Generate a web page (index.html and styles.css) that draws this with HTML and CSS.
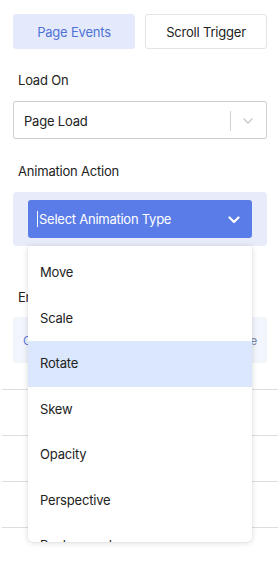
FILE: index.html
```html
<!DOCTYPE html>
<html>
<head>
<meta charset="utf-8">
<link rel="stylesheet" href="styles.css">
</head>
<body>
<div class="panel">
  <div class="tabs">
    <button class="tab tab-active">Page Events</button>
    <button class="tab">Scroll Trigger</button>
  </div>

  <div class="label label-first">Load On</div>
  <div class="select">
    <span class="select-value">Page Load</span>
    <span class="select-sep"></span>
    <svg class="select-chev" width="12" height="8" viewBox="0 0 12 8"><path d="M1.5 1.5 L6 6 L10.5 1.5" fill="none" stroke="#c8c8c8" stroke-width="1.4"/></svg>
  </div>

  <div class="label label-second">Animation Action</div>
  <div class="action-wrap">
    <div class="action-box">
      <div class="action-btn">
        <span class="caret"></span>
        <span class="action-text">Select Animation Type</span>
        <svg class="action-chev" width="12" height="8" viewBox="0 0 12 8"><path d="M1.5 1.5 L6 6 L10.5 1.5" fill="none" stroke="#ffffff" stroke-width="2.2" stroke-linecap="round" stroke-linejoin="round"/></svg>
      </div>
    </div>
    <div class="menu">
      <div class="menu-item">Move</div>
      <div class="menu-item">Scale</div>
      <div class="menu-item menu-item-active">Rotate</div>
      <div class="menu-item">Skew</div>
      <div class="menu-item">Opacity</div>
      <div class="menu-item">Perspective</div>
      <div class="menu-item">Background</div>
    </div>
  </div>

  <div class="label label-third">Entrance Effects</div>
  <div class="effects-box">
    <span class="effects-left">Clear</span>
    <span class="effects-right">Remove</span>
  </div>

  <div class="rows">
    <div class="row"></div>
    <div class="row"></div>
    <div class="row"></div>
    <div class="row"></div>
  </div>
</div>
</body>
</html>
```
FILE: styles.css
```css
* { box-sizing: border-box; }
html, body {
  margin: 0;
  padding: 0;
  background: #ffffff;
}
body {
  font-family: Inter, "Liberation Sans", sans-serif;
  font-size: 13px;
  letter-spacing: -0.2px;
  color: #222222;
  width: 280px;
  height: 566px;
  overflow: hidden;
}
.panel {
  padding: 14px 13px 0 13px;
}
.tabs {
  display: grid;
  grid-template-columns: 1fr 1fr;
  column-gap: 10px;
}
.tab {
  height: 35px;
  font-family: inherit;
  font-size: 13px;
  letter-spacing: -0.2px;
  color: #222222;
  background: #ffffff;
  border: 1px solid #e3e3e3;
  border-radius: 3px;
  padding: 0;
}
.tab-active {
  background: #e4eafb;
  border-color: #e4eafb;
  color: #4f72d6;
}
.label {
  padding-left: 5px;
  line-height: 18px;
  height: 18px;
  margin-top: 23px;
  margin-bottom: 11px;
  color: #222222;
}
.label-first {
  margin-top: 22px;
  margin-bottom: 12px;
}
.label-second {
  margin-bottom: 12px;
}
.select {
  height: 38px;
  border: 1px solid #cfcfcf;
  border-radius: 2px;
  display: flex;
  align-items: center;
  padding-left: 10px;
  padding-top: 1px;
}
.select-value {
  flex: 1;
  color: #222222;
}
.select-sep {
  width: 1px;
  height: 20px;
  background: #d2d2d2;
  margin-right: 11px;
}
.select-chev {
  margin-right: 12px;
}
.action-wrap {
  position: relative;
}
.action-box {
  background: #e7ebfa;
  border-radius: 4px;
  padding: 8px 15px 8px 15px;
}
.action-btn {
  height: 38px;
  background: #5a7ce8;
  border-radius: 3px;
  display: flex;
  align-items: center;
  padding-left: 9px;
  padding-right: 12px;
  color: #ffffff;
}
.caret {
  width: 1px;
  height: 16px;
  background: #ffffff;
  margin-right: 1px;
}
.action-text {
  flex: 1;
  font-size: 13px;
  letter-spacing: -0.25px;
}
.action-chev {
  margin-top: 1px;
}
.menu {
  position: absolute;
  top: 100%;
  left: 15px;
  right: 15px;
  height: 296px;
  overflow: hidden;
  background: #ffffff;
  border-radius: 0 0 5px 5px;
  box-shadow: 0 1px 6px rgba(0, 0, 0, 0.14), 0 0 1px rgba(0, 0, 0, 0.12);
  padding-top: 4px;
  z-index: 2;
}
.menu-item {
  height: 45.5px;
  line-height: 45.5px;
  padding-left: 12px;
  color: #222222;
}
.menu-item-active {
  background: #dbe7fc;
}
.label-third {
  margin-top: 42px;
}
.effects-box {
  height: 46px;
  background: #f3f5fd;
  border-radius: 3px;
  display: flex;
  align-items: center;
  justify-content: space-between;
  padding: 0 10px;
  color: #5b7bd8;
  font-size: 12px;
}
.effects-right {
  color: #7a86a8;
}
.rows {
  margin: 26px -11px 0 -11px;
}
.row {
  height: 46px;
  border-top: 1px solid #dedede;
}
```
